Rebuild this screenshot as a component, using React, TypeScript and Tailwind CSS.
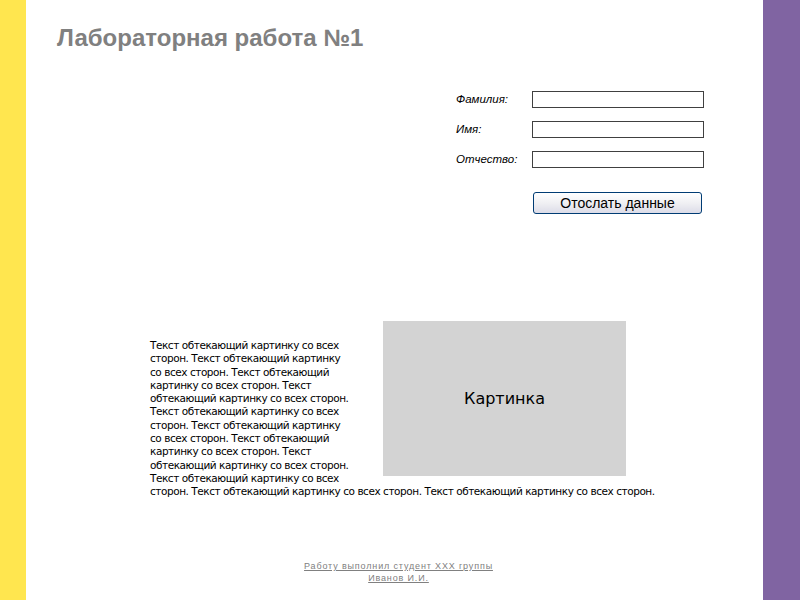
export default function App() {
  const sentence = 'Текст обтекающий картинку со всех сторон.';
  const para = Array.from({ length: 11 }, () => sentence).join(' ');

  return (
    <div className="flex h-[600px] w-[800px] overflow-hidden bg-white font-['Liberation_Sans',Arial,sans-serif]">
      {/* left stripe */}
      <div className="w-[26px] shrink-0 bg-[#ffe64f]" />

      {/* content */}
      <div className="flex flex-1 flex-col">
        <h1 className="ml-[31px] mt-[24px] text-[24px] font-bold leading-[28px] text-[#808080]">
          Лабораторная работа №1
        </h1>

        {/* form */}
        <form className="ml-[430px] mt-[39px] flex flex-col">
          {['Фамилия:', 'Имя:', 'Отчество:'].map((label) => (
            <div key={label} className="mb-[13px] flex h-[17px] items-center">
              <label className="w-[76px] text-[11.5px] italic text-black">{label}</label>
              <input
                type="text"
                className="h-[17px] w-[172px] border border-[#404040] bg-white px-1 text-[12px] outline-none"
              />
            </div>
          ))}
          <button
            type="button"
            className="ml-[77px] mt-[11px] h-[22px] w-[169px] rounded-[3px] border border-[#003c74] bg-gradient-to-b from-white via-[#f0f0f3] to-[#dcdce8] text-[14px] leading-none text-black"
          >
            Отослать данные
          </button>
        </form>

        {/* text with floating picture */}
        <div className="ml-[124px] mt-[125px] w-[510px] text-[10.5px] leading-[13.3px] tracking-[-0.45px] text-black font-['DejaVu_Sans',sans-serif]">
          <div className="float-right -mt-[18px] ml-[32px] mr-[34px] mb-[4px] flex h-[155px] w-[243px] items-center justify-center bg-[#d3d3d3] text-[16px] tracking-normal">
            Картинка
          </div>
          <p>{para}</p>
        </div>

        {/* footer */}
        <div className="mt-auto mb-[16px] ml-[8px] flex flex-col items-center text-[9px] leading-[12px] tracking-[0.85px] text-[#808080]">
          <a href="#" className="underline">Работу выполнил студент XXX группы</a>
          <a href="#" className="underline">Иванов И.И.</a>
        </div>
      </div>

      {/* right stripe */}
      <div className="w-[37px] shrink-0 bg-[#8064a2]" />
    </div>
  );
}
